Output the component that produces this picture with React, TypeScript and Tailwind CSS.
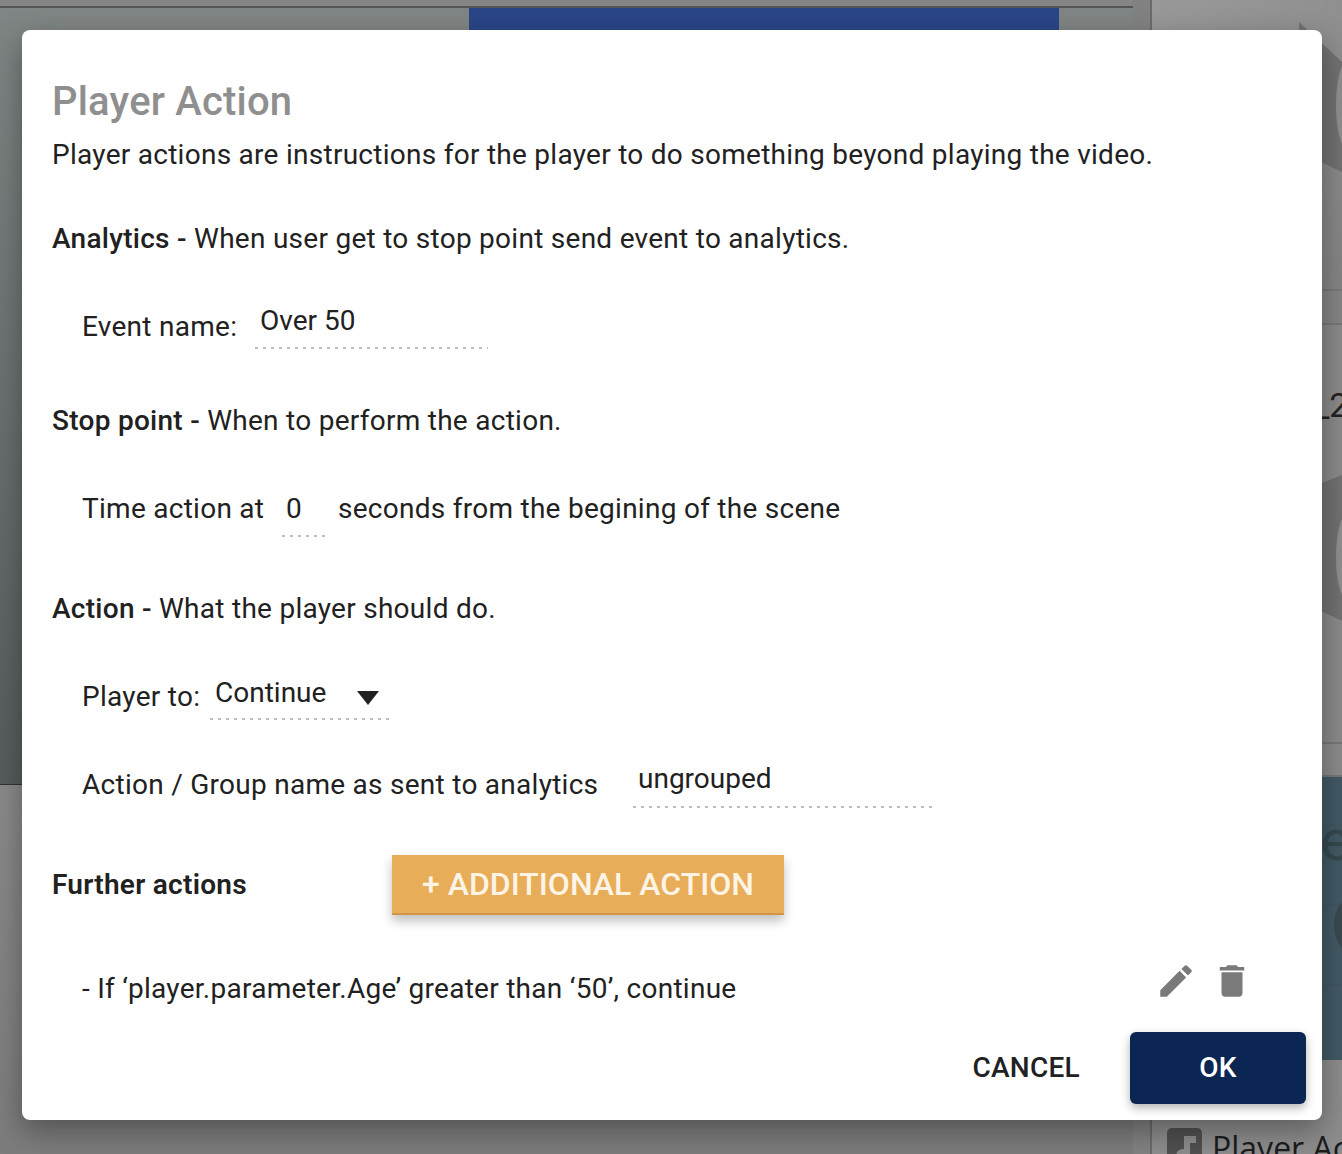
const font = { fontFamily: 'Roboto, "Liberation Sans", sans-serif' };

function Dotted({ className, children }: { className: string; children: React.ReactNode }) {
  return (
    <div className={`relative tracking-normal ${className}`}>
      {children}
      <div className="absolute bottom-0 left-0 h-[2px] w-full bg-[repeating-linear-gradient(90deg,#bdbdbd_0_3px,transparent_3px_8px)]" />
    </div>
  );
}

function Background() {
  return (
    <div className="flex h-[1154px] w-[1342px] overflow-hidden bg-[#868686]">
      <div className="flex w-[1133px] shrink-0 flex-col">
        <div className="h-[6px] shrink-0 box-content border-b-2 border-[#555555] bg-[#858585]" />
        <div className="flex h-[777px] shrink-0 border-b border-[#333333] bg-gradient-to-b from-[#808685] to-[#565b5b]">
          <div className="w-[469px] shrink-0" />
          <div className="h-[60px] w-[590px] bg-[#2a4587]" />
        </div>
        <div className="flex-1 bg-gradient-to-b from-[#8a8a8a] to-[#7c7c7c]" />
      </div>
      <div className="w-[17px] shrink-0 bg-[#828282]" />
      <div className="flex flex-1 flex-col border-l-2 border-[#6b6b6b]">
        <div className="h-[289px] shrink-0 bg-gradient-to-br from-[#999999] to-[#818181]">
          <svg viewBox="0 0 190 289" className="h-[289px] w-[190px]">
            <path d="M147 22 L190 62 V172 L165 160 L147 120Z" fill="#717171" />
            <ellipse cx="196" cy="105" rx="12" ry="45" fill="#8f8f8f" />
          </svg>
        </div>
        <div className="h-[36px] shrink-0 border-y-2 border-[#777777] bg-[#858585]" />
        <div className="relative h-[417px] shrink-0 bg-[#8a8a8a] pl-[162px] pt-[60px] text-[34px] leading-[40px] text-[#222222]" style={font}>
          <svg viewBox="0 0 190 417" className="absolute left-0 top-0 h-[417px] w-[190px]">
            <path d="M165 160 L190 150 V296 L165 284Z" fill="#717171" />
            <ellipse cx="196" cy="232" rx="12" ry="44" fill="#8f8f8f" />
          </svg>
          <span className="relative">_2</span>
        </div>
        <div className="h-[35px] shrink-0 border-y-2 border-[#777777] bg-[#8b8b8b]" />
        <div className="relative h-[283px] shrink-0 overflow-hidden bg-[#425965] pl-[168px] pt-[28px] text-[58px] leading-[70px] text-[#35494f]" style={font}>
          <svg viewBox="0 0 190 283" className="absolute left-0 top-0 h-[283px] w-[190px]">
            <path d="M0 48H190M0 128H190M0 208H190" stroke="#3e545f" strokeWidth="1" />
            <ellipse cx="198" cy="148" rx="16" ry="26" fill="#39494f" />
          </svg>
          <span className="relative">e</span>
        </div>
        <div className="flex flex-1 items-start gap-[10px] bg-[#8d8d8d] pl-[15px] pt-[68px] text-[32px] leading-[40px] text-[#1c1c1c]" style={{ fontFamily: '"Open Sans", sans-serif' }}>
          <svg viewBox="0 0 35 40" className="h-[40px] w-[35px] shrink-0">
            <rect width="35" height="40" rx="5" fill="#505050" />
            <path d="M17 8H29V15H23V27A7 7 0 1 1 17 21Z" fill="#8d8d8d" />
          </svg>
          <span className="whitespace-nowrap">Player Action</span>
        </div>
      </div>
    </div>
  );
}

function Head({ b, t }: { b: string; t: string }) {
  return (
    <div className="text-[#212121]">
      <b className="font-medium">{b} - </b>
      {t}
    </div>
  );
}

export default function App() {
  return (
    <div className="relative h-[1154px] w-[1342px] overflow-hidden" style={font}>
      <Background />
      <div className="absolute left-[22px] top-[30px] flex h-[1090px] w-[1300px] flex-col rounded-[8px] bg-white pl-[30px] text-[28px] leading-[32px] tracking-[0.27px] text-[#212121] shadow-[0_11px_30px_rgba(0,0,0,0.35)]">
        <div className="mt-[50px] text-[40px] font-medium leading-[44px] tracking-[0.2px] text-[#8f8f8f]">Player Action</div>
        <div className="mt-[15px]">Player actions are instructions for the player to do something beyond playing the video.</div>
        <div className="mt-[52px]"><Head b="Analytics" t="When user get to stop point send event to analytics." /></div>
        <div className="mt-[56px] flex items-start pl-[30px]">
          <span className="w-[173px]">Event name:</span>
          <Dotted className="-mt-[6px] h-[44px] w-[233px] pl-[5px]">Over 50</Dotted>
        </div>
        <div className="mt-[56px]"><Head b="Stop point" t="When to perform the action." /></div>
        <div className="mt-[56px] flex items-start pl-[30px]">
          <span className="w-[200px]">Time action at</span>
          <Dotted className="h-[44px] w-[43px] pl-[4px]">0</Dotted>
          <span className="ml-[13px]">seconds from the begining of the scene</span>
        </div>
        <div className="mt-[56px]"><Head b="Action" t="What the player should do." /></div>
        <div className="mt-[56px] flex items-start pl-[30px]">
          <span className="w-[128px]">Player to:</span>
          <Dotted className="-mt-[4px] flex h-[43px] w-[179px] items-start justify-between pl-[5px] pr-[10px]">
            Continue
            <svg viewBox="0 0 22 14" className="mt-[14px] h-[14px] w-[22px]"><path d="M0 0H22L11 14Z" fill="#212121" /></svg>
          </Dotted>
        </div>
        <div className="mt-[49px] flex items-start pl-[30px]">
          <span className="w-[551px] whitespace-nowrap">Action / Group name as sent to analytics</span>
          <Dotted className="-mt-[6px] h-[45px] w-[300px] pl-[5px]">ungrouped</Dotted>
        </div>
        <div className="mt-[47px] flex items-center">
          <b className="w-[340px] font-semibold">Further actions</b>
          <div className="flex h-[60px] w-[392px] items-center justify-center border-b-2 border-[#cf9648] bg-[#e8ad58] text-[32px] font-medium tracking-normal text-[#fdf4e6] shadow-[0_6px_10px_rgba(0,0,0,0.25)]">
            + ADDITIONAL ACTION
          </div>
        </div>
        <div className="relative mt-[58px] pl-[30px]">
          <span>- If ‘player.parameter.Age’ greater than ‘50’, continue</span>
          <div className="absolute left-[1103px] -top-[13px] flex gap-[14px]">
            <svg viewBox="0 0 24 24" className="h-[42px] w-[42px]" fill="#7a7a7a"><path d="M3 17.25V21h3.75L17.81 9.94l-3.75-3.75L3 17.25zM20.71 7.04c.39-.39.39-1.02 0-1.41l-2.34-2.34c-.39-.39-1.02-.39-1.41 0l-1.83 1.83 3.75 3.75 1.83-1.83z" /></svg>
            <svg viewBox="0 0 24 24" className="h-[42px] w-[42px]" fill="#7a7a7a"><path d="M6 19c0 1.1.9 2 2 2h8c1.1 0 2-.9 2-2V7H6v12zM19 4h-3.5l-1-1h-5l-1 1H5v2h14V4z" /></svg>
          </div>
        </div>
        <div className="mt-auto mb-[16px] flex items-center justify-end pr-[16px]">
          <span className="mr-[50px] font-medium">CANCEL</span>
          <div className="flex h-[72px] w-[176px] items-center justify-center rounded-[6px] bg-[#0c2654] font-medium text-white shadow-[0_4px_10px_rgba(0,0,0,0.3)]">OK</div>
        </div>
      </div>
    </div>
  );
}
